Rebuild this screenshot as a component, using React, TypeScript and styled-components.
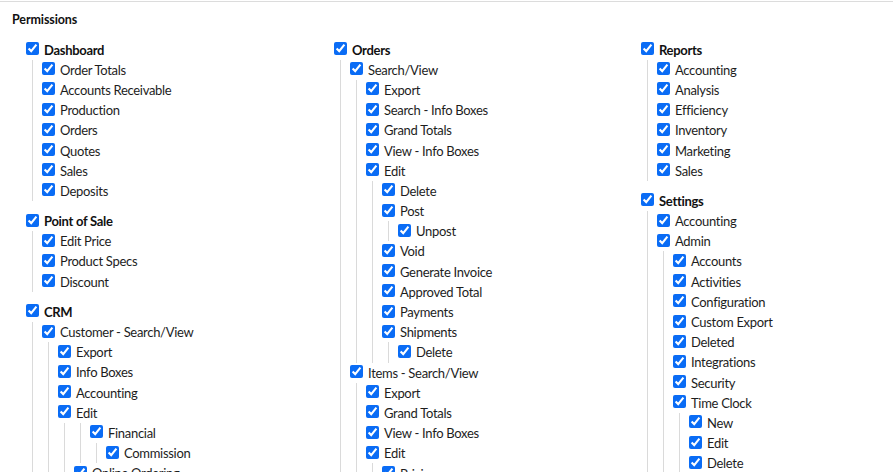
import styled, { createGlobalStyle } from "styled-components";

type PermNode = {
  label?: string;
  children?: PermNode[];
};

const leaves = (...names: string[]): PermNode[] => names.map((label) => ({ label }));

const columns: PermNode[][] = [
  [
    {
      label: "Dashboard",
      children: leaves("Order Totals", "Accounts Receivable", "Production", "Orders", "Quotes", "Sales", "Deposits"),
    },
    { label: "Point of Sale", children: leaves("Edit Price", "Product Specs", "Discount") },
    {
      label: "CRM",
      children: [
        {
          label: "Customer - Search/View",
          children: [
            ...leaves("Export", "Info Boxes", "Accounting"),
            {
              label: "Edit",
              children: [
                { children: [{ label: "Financial", children: leaves("Commission") }] },
                { label: "Online Ordering" },
              ],
            },
          ],
        },
      ],
    },
  ],
  [
    {
      label: "Orders",
      children: [
        {
          label: "Search/View",
          children: [
            ...leaves("Export", "Search - Info Boxes", "Grand Totals", "View - Info Boxes"),
            {
              label: "Edit",
              children: [
                { label: "Delete" },
                { label: "Post", children: leaves("Unpost") },
                ...leaves("Void", "Generate Invoice", "Approved Total", "Payments"),
                { label: "Shipments", children: leaves("Delete") },
              ],
            },
          ],
        },
        {
          label: "Items - Search/View",
          children: [
            ...leaves("Export", "Grand Totals", "View - Info Boxes"),
            { label: "Edit", children: leaves("Pricing") },
          ],
        },
      ],
    },
  ],
  [
    {
      label: "Reports",
      children: leaves("Accounting", "Analysis", "Efficiency", "Inventory", "Marketing", "Sales"),
    },
    {
      label: "Settings",
      children: [
        { label: "Accounting" },
        {
          label: "Admin",
          children: [
            ...leaves("Accounts", "Activities", "Configuration", "Custom Export", "Deleted", "Integrations", "Security"),
            { label: "Time Clock", children: leaves("New", "Edit", "Delete") },
          ],
        },
      ],
    },
  ],
];

const GlobalStyle = createGlobalStyle`
  body {
    margin: 0;
    background: #fff;
    font-family: Lato, "Open Sans", sans-serif;
    color: #1d1d1d;
  }
`;

const Page = styled.div`
  margin-top: 1px;
  border-top: 1px solid #dcdcdc;
  padding: 10px 12px 0;
`;

const Title = styled.h2`
  margin: 0;
  font-size: 12.5px;
  font-weight: 700;
  line-height: 16px;
  letter-spacing: -0.1px;
  color: #111;
`;

const Columns = styled.div`
  display: grid;
  grid-template-columns: 308px 307px 1fr;
  padding: 11.5px 0 0 14px;
`;

const Tree = styled.ul`
  list-style: none;
  margin: 0;
  padding: 0;
`;

const SubTree = styled.ul`
  list-style: none;
  margin: 0 0 0 6px;
  padding: 0 0 0 9px;
  border-left: 1px solid #dadada;
`;

const Group = styled.li<{ $top?: boolean }>`
  margin-bottom: ${(p) => (p.$top ? "10px" : "0")};
`;

const Row = styled.label`
  display: flex;
  align-items: center;
  gap: 5px;
  height: 20.2px;
  white-space: nowrap;
`;

const Box = styled.input`
  width: 13px;
  height: 13px;
  margin: -2px 0 0;
  flex: none;
  accent-color: #0a6cf5;
`;

const Label = styled.span<{ $bold?: boolean }>`
  font-size: 13px;
  letter-spacing: -0.3px;
  font-weight: ${(p) => (p.$bold ? 700 : 400)};
  color: ${(p) => (p.$bold ? "#111" : "#1d1d1d")};
`;

function PermItem({ node, top }: { node: PermNode; top?: boolean }) {
  return (
    <Group $top={top}>
      {node.label && (
        <Row>
          <Box type="checkbox" defaultChecked />
          <Label $bold={top}>{node.label}</Label>
        </Row>
      )}
      {node.children && (
        <SubTree>
          {node.children.map((child, i) => (
            <PermItem key={i} node={child} />
          ))}
        </SubTree>
      )}
    </Group>
  );
}

export default function App() {
  return (
    <>
      <GlobalStyle />
      <Page>
        <Title>Permissions</Title>
        <Columns>
          {columns.map((col, i) => (
            <Tree key={i}>
              {col.map((node, j) => (
                <PermItem key={j} node={node} top />
              ))}
            </Tree>
          ))}
        </Columns>
      </Page>
    </>
  );
}
